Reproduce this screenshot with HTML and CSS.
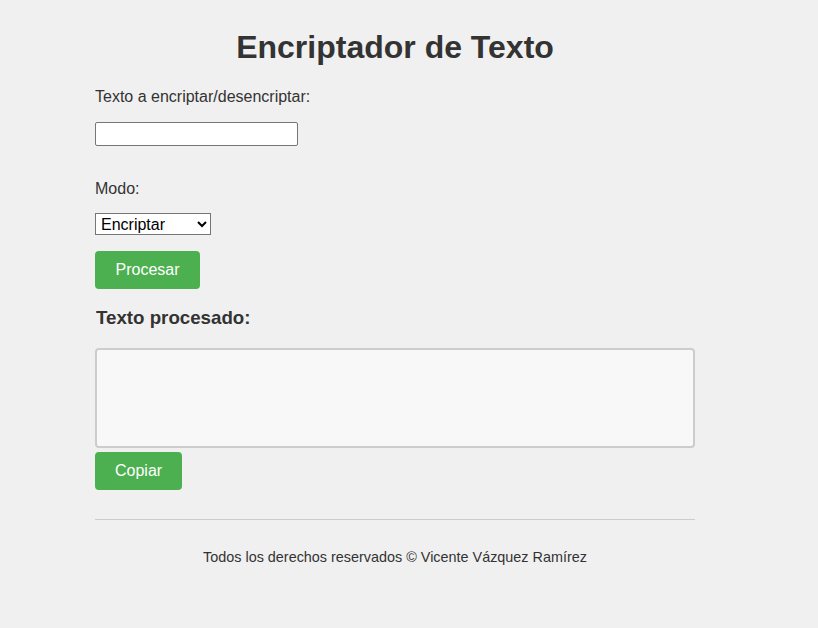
FILE: index.html
```html
<!DOCTYPE html>
<html lang="es">
<head>
<meta charset="utf-8">
<title>Encriptador de Texto</title>
<link rel="stylesheet" href="styles.css">
</head>
<body>
<div class="container">
  <h1 class="title">Encriptador de Texto</h1>
  <label class="label" for="texto">Texto a encriptar/desencriptar:</label>
  <input class="text-input" id="texto" type="text">
  <label class="label label-mode" for="modo">Modo:</label>
  <select class="mode-select" id="modo">
    <option>Encriptar</option>
    <option>Desencriptar</option>
  </select>
  <button class="btn btn-process">Procesar</button>
  <h2 class="subtitle">Texto procesado:</h2>
  <textarea class="output" readonly></textarea>
  <button class="btn btn-copy">Copiar</button>
  <hr class="divider">
  <footer class="footer">Todos los derechos reservados © Vicente Vázquez Ramírez</footer>
</div>
</body>
</html>
```
FILE: styles.css
```css
html, body {
  margin: 0;
  padding: 0;
  background: #f0f0f0;
}
body {
  font-family: "Liberation Sans", Arial, sans-serif;
  color: #333;
}
.container {
  width: 600px;
  margin-left: 95px;
  display: flex;
  flex-direction: column;
  align-items: flex-start;
}
.title {
  align-self: stretch;
  text-align: center;
  font-size: 32px;
  font-weight: bold;
  margin: 27px 0 0 0;
  line-height: 40px;
  color: #333;
}
.label {
  font-size: 16px;
  line-height: 18px;
  margin-top: 21px;
  color: #333;
}
.label-mode {
  margin-top: 34px;
}
.text-input {
  box-sizing: border-box;
  width: 203px;
  height: 24px;
  margin: 16px 0 0 0;
  border: 1px solid #767676;
  border-radius: 2px;
  background: #fff;
  font-size: 16px;
  padding: 1px 2px;
}
.mode-select {
  box-sizing: border-box;
  width: 116px;
  height: 22px;
  margin: 15px 0 0 0;
  border: 1px solid #767676;
  border-radius: 0;
  background: #fff;
  font-family: "Liberation Sans", Arial, sans-serif;
  font-size: 16px;
  color: #000;
  padding: 0 0 0 1px;
}
.btn {
  box-sizing: border-box;
  height: 38px;
  padding: 0 20px;
  border: none;
  border-radius: 4px;
  background: #4caf50;
  color: #fff;
  font-family: "Liberation Sans", Arial, sans-serif;
  font-size: 16px;
  cursor: pointer;
}
.btn-process {
  margin-top: 16px;
  width: 105px;
}
.btn-copy {
  margin-top: 4px;
  width: 87px;
}
.subtitle {
  font-size: 18.72px;
  font-weight: bold;
  margin: 18px 0 0 1px;
  line-height: 22px;
  color: #333;
}
.output {
  box-sizing: border-box;
  width: 600px;
  height: 100px;
  margin-top: 19px;
  border: 2px solid #ccc;
  border-radius: 4px;
  background: #f8f8f8;
  resize: none;
  display: block;
}
.divider {
  align-self: stretch;
  margin: 29px 0 0 0;
  border: none;
  border-top: 1px solid #ccc;
  height: 0;
}
.footer {
  align-self: stretch;
  text-align: center;
  font-size: 14.4px;
  line-height: 16px;
  margin-top: 29px;
  color: #333;
}
```
